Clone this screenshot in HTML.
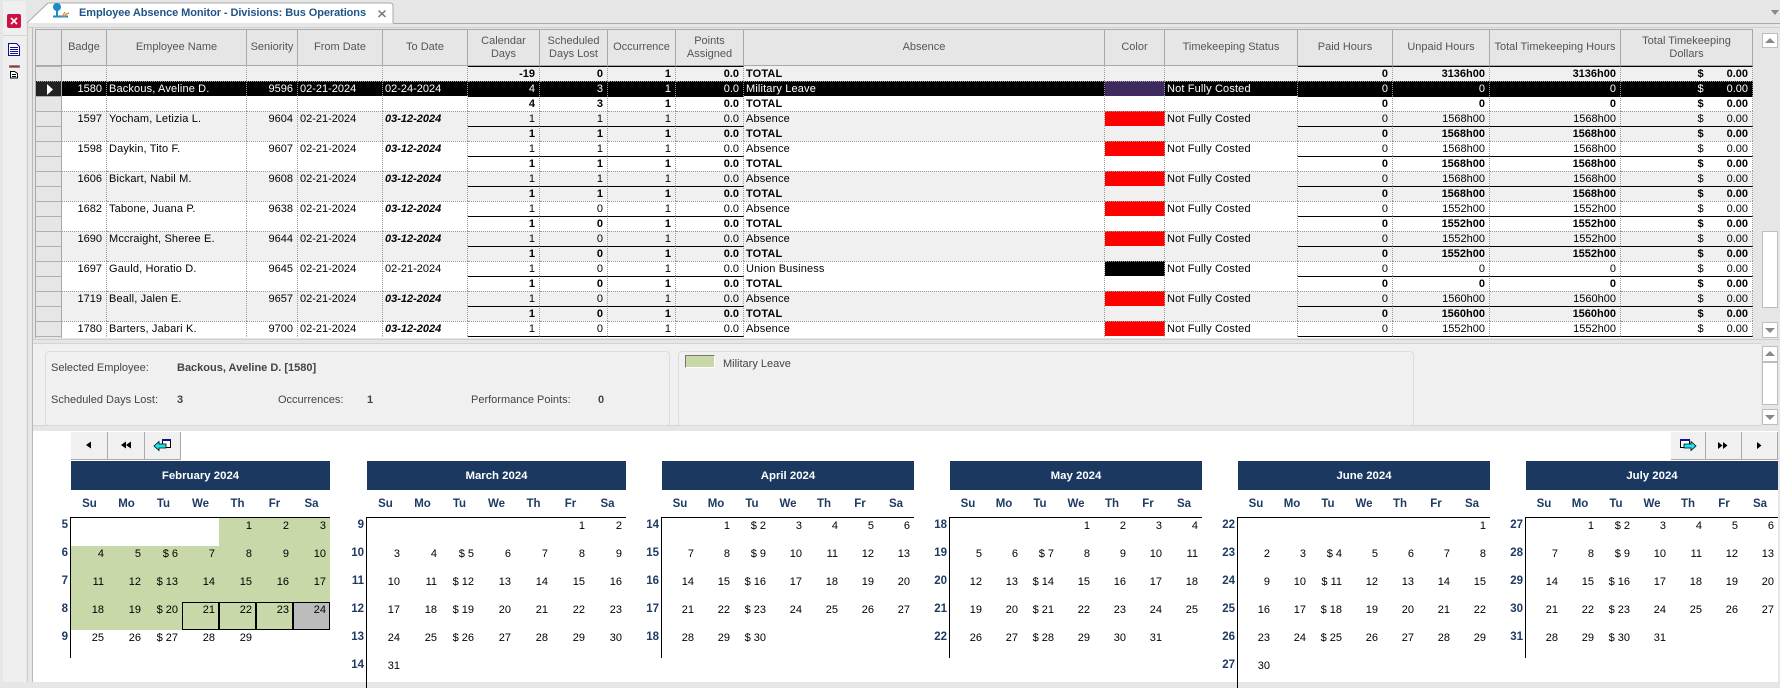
<!DOCTYPE html>
<html><head><meta charset="utf-8"><style>
html,body{margin:0;padding:0}
body{width:1780px;height:682px;overflow:hidden;position:relative;background:#e6e6e6;font:11px "Liberation Sans",sans-serif;color:#000}
.a{position:absolute}
#gw{position:absolute;left:35px;top:29px;width:1718px;height:309px;overflow:hidden;background:#f0f0f0}
#g{border-collapse:separate;border-spacing:0;table-layout:fixed;width:1718px}
#g th{height:35px;padding:0;font-weight:normal;color:#555;background:#e6e6e6;border-top:1px solid #a8a8a8;border-right:1px solid #a8a8a8;border-bottom:1px solid #a8a8a8;line-height:13px;text-align:center}
#g th:first-child{border-left:1px solid #a8a8a8}
#g td{height:13px;padding:1px 4px 0 2px;line-height:13px;vertical-align:top;white-space:nowrap;overflow:hidden;border-top:1px solid transparent;border-right:1px dotted #999}
#g td:nth-child(1){background:#e6e6e6;border-right:1px solid #a8a8a8;border-left:1px solid #a8a8a8;border-top:1px solid #b0b0b0}
#g td:nth-child(2),#g td:nth-child(4),#g td:nth-child(n+7):nth-child(-n+10),#g td:nth-child(n+14){text-align:right}
#g td:nth-child(3),#g td:nth-child(11),#g td:nth-child(13){letter-spacing:.15px}
#g tr.g td{background:#f0f0f0}
#g tr.w td{background:#fff}
#g tr.m td{border-top:1px dotted #999}
#g tr.t td{font-weight:bold}
#g tr.g td:first-child,#g tr.w td:first-child{background:#e6e6e6;border-top:1px solid #b0b0b0}
#g tr.t td:nth-child(n+7):nth-child(-n+10),#g tr.t td:nth-child(n+14){border-top:1px solid #000}
#g tr.s td{background:#000;color:#fff;border-top:1px dotted #999}
#g tr.s td:first-child{background:#222;position:relative}
#g tr.s td.c{background:#3e2a5f}
#g tr td.r{background:#f00}
#g tr td.k{background:#000}
#g td:nth-child(6) b{font-style:italic}
i{font-style:normal;margin-right:23px}
.sb{position:absolute;left:1762px;width:14px;background:#fff;border:1px solid #bdbdbd}
.det{color:#444}
.gb{position:absolute;border:1px solid #dcdcdc;border-radius:4px;box-sizing:border-box}
.btn{position:absolute;top:432px;height:28px;background:#f0f0f0;border-right:1px solid #aaa;border-bottom:1px solid #aaa;box-sizing:border-box}
.mo{position:absolute;top:461px}
.mh{height:29px;background:#1a3860;color:#fff;font-weight:bold;font-size:11.4px;line-height:30px;text-align:center}
.dw{display:flex;height:27px;font-weight:bold;font-size:11.5px;color:#1f3b63;line-height:28px;text-align:center}
.dw span{flex:1}
.gr{border-top:1px solid #000;border-left:1px solid #000;margin-left:-1px;position:relative}
.gr table{border-collapse:collapse;table-layout:fixed;width:100%;position:relative}
.gr td{height:28px;padding:1px 4px 0 0;text-align:right;vertical-align:top;line-height:14px;font-size:11px;box-sizing:border-box}
.gr td.x{background:#c8d8a8;box-shadow:inset 0 0 0 1px #000}
.gr td.y{background:#bcbcbc;box-shadow:inset 0 0 0 1px #000}
.gn{position:absolute;background:#c8d8a8}
.wk{position:absolute;left:-39px;width:36px;top:0;text-align:right;font-weight:bold;font-size:11.5px;color:#1f3b63;line-height:28px}
.wk div{height:28px;line-height:14px}
</style></head><body>

<div class="a" style="left:3px;top:1px;width:23px;height:681px;background:#efefef"></div>
<div class="a" style="left:3px;top:35px;width:23px;height:1px;background:#d4d4d4"></div>
<svg class="a" style="left:0;top:0" width="30" height="90">
<rect x="7" y="14" width="14" height="14" rx="2" fill="#cf1142"/>
<path d="M11 18l6 6M17 18l-6 6" stroke="#fff" stroke-width="1.6"/>
<path d="M8.500 43.500h8l3 3v9h-11z" fill="#fff" stroke="#10108c"/>
<path d="M10 47.500h8M10 49.500h8M10 51.500h8M10 53.500h8" stroke="#10108c"/>
<path d="M9.500 65.500h10v2h-10z" fill="#fff" stroke="#888"/><path d="M10 66.500h9" stroke="#c81e1e"/>
<path d="M10.500 71.500h4l3 2v4.500h-7z" fill="#fff" stroke="#000"/><path d="M12 74.500h4M12 76.500h4" stroke="#000"/>
</svg>

<svg class="a" style="left:26px;top:0" width="380" height="30">
<path d="M1 23 L22 3 H364 Q367 3 367 6 V23" fill="#fff" stroke="#aaa"/>
<circle cx="31" cy="7" r="4" fill="#1a8cc8"/>
<path d="M31 10V17M27 16.500H42" stroke="#1a8cc8" stroke-width="2" fill="none"/>
<path d="M36 17l3-5M38 17l2-3 3-1" stroke="#d98a2c" stroke-width="1.200" fill="none"/>
<path d="M352.500 10.500l7 6.500M359.500 10.500l-7 6.500" stroke="#777" stroke-width="1.500"/>
</svg>
<div class="a" style="left:79px;top:6px;font-weight:bold;color:#1f5488;font-size:11px;line-height:14px;white-space:nowrap;letter-spacing:-.08px">Employee Absence Monitor - Divisions: Bus Operations</div>
<div class="a" style="left:393px;top:23px;width:1387px;height:1px;background:#aaa"></div>
<div class="a" style="left:27px;top:27px;width:1753px;height:1px;background:#cfcfcf"></div>
<div class="a" style="left:27px;top:23px;width:1px;height:659px;background:#cfcfcf"></div>
<div class="a" style="left:32px;top:28px;width:1px;height:654px;background:#b8b8b8"></div>
<svg class="a" style="left:1770px;top:9px" width="10" height="7"><path d="M1 1h8l-4 5z" fill="#888"/></svg>

<div id="gw"><table id="g">
<colgroup><col style="width:27px"><col style="width:45px"><col style="width:140px"><col style="width:51px"><col style="width:85px"><col style="width:85px"><col style="width:72px"><col style="width:68px"><col style="width:68px"><col style="width:68px"><col style="width:361px"><col style="width:60px"><col style="width:133px"><col style="width:95px"><col style="width:97px"><col style="width:131px"><col style="width:132px"></colgroup>
<tr><th></th><th>Badge</th><th>Employee Name</th><th>Seniority</th><th>From Date</th><th>To Date</th><th>Calendar<br>Days</th><th>Scheduled<br>Days Lost</th><th>Occurrence</th><th>Points<br>Assigned</th><th>Absence</th><th>Color</th><th>Timekeeping Status</th><th>Paid Hours</th><th>Unpaid Hours</th><th>Total Timekeeping Hours</th><th>Total Timekeeping<br>Dollars</th></tr>
<tr class="t g"><td></td><td></td><td></td><td></td><td></td><td></td><td>-19</td><td>0</td><td>1</td><td>0.0</td><td>TOTAL</td><td></td><td></td><td>0</td><td>3136h00</td><td>3136h00</td><td><i>$</i>0.00</td></tr>
<tr class="s"><td><svg width="24" height="13" style="display:block"><path d="M9 1l6 5.500-6 5.500z" fill="#fff"/></svg></td><td>1580</td><td>Backous, Aveline D.</td><td>9596</td><td>02-21-2024</td><td>02-24-2024</td><td>4</td><td>3</td><td>1</td><td>0.0</td><td>Military Leave</td><td class="c"></td><td>Not Fully Costed</td><td>0</td><td>0</td><td>0</td><td><i>$</i>0.00</td></tr>
<tr class="t w"><td></td><td></td><td></td><td></td><td></td><td></td><td>4</td><td>3</td><td>1</td><td>0.0</td><td>TOTAL</td><td></td><td></td><td>0</td><td>0</td><td>0</td><td><i>$</i>0.00</td></tr>
<tr class="m g"><td></td><td>1597</td><td>Yocham, Letizia L.</td><td>9604</td><td>02-21-2024</td><td><b>03-12-2024</b></td><td>1</td><td>1</td><td>1</td><td>0.0</td><td>Absence</td><td class="r"></td><td>Not Fully Costed</td><td>0</td><td>1568h00</td><td>1568h00</td><td><i>$</i>0.00</td></tr>
<tr class="t g"><td></td><td></td><td></td><td></td><td></td><td></td><td>1</td><td>1</td><td>1</td><td>0.0</td><td>TOTAL</td><td></td><td></td><td>0</td><td>1568h00</td><td>1568h00</td><td><i>$</i>0.00</td></tr>
<tr class="m w"><td></td><td>1598</td><td>Daykin, Tito F.</td><td>9607</td><td>02-21-2024</td><td><b>03-12-2024</b></td><td>1</td><td>1</td><td>1</td><td>0.0</td><td>Absence</td><td class="r"></td><td>Not Fully Costed</td><td>0</td><td>1568h00</td><td>1568h00</td><td><i>$</i>0.00</td></tr>
<tr class="t w"><td></td><td></td><td></td><td></td><td></td><td></td><td>1</td><td>1</td><td>1</td><td>0.0</td><td>TOTAL</td><td></td><td></td><td>0</td><td>1568h00</td><td>1568h00</td><td><i>$</i>0.00</td></tr>
<tr class="m g"><td></td><td>1606</td><td>Bickart, Nabil M.</td><td>9608</td><td>02-21-2024</td><td><b>03-12-2024</b></td><td>1</td><td>1</td><td>1</td><td>0.0</td><td>Absence</td><td class="r"></td><td>Not Fully Costed</td><td>0</td><td>1568h00</td><td>1568h00</td><td><i>$</i>0.00</td></tr>
<tr class="t g"><td></td><td></td><td></td><td></td><td></td><td></td><td>1</td><td>1</td><td>1</td><td>0.0</td><td>TOTAL</td><td></td><td></td><td>0</td><td>1568h00</td><td>1568h00</td><td><i>$</i>0.00</td></tr>
<tr class="m w"><td></td><td>1682</td><td>Tabone, Juana P.</td><td>9638</td><td>02-21-2024</td><td><b>03-12-2024</b></td><td>1</td><td>0</td><td>1</td><td>0.0</td><td>Absence</td><td class="r"></td><td>Not Fully Costed</td><td>0</td><td>1552h00</td><td>1552h00</td><td><i>$</i>0.00</td></tr>
<tr class="t w"><td></td><td></td><td></td><td></td><td></td><td></td><td>1</td><td>0</td><td>1</td><td>0.0</td><td>TOTAL</td><td></td><td></td><td>0</td><td>1552h00</td><td>1552h00</td><td><i>$</i>0.00</td></tr>
<tr class="m g"><td></td><td>1690</td><td>Mccraight, Sheree E.</td><td>9644</td><td>02-21-2024</td><td><b>03-12-2024</b></td><td>1</td><td>0</td><td>1</td><td>0.0</td><td>Absence</td><td class="r"></td><td>Not Fully Costed</td><td>0</td><td>1552h00</td><td>1552h00</td><td><i>$</i>0.00</td></tr>
<tr class="t g"><td></td><td></td><td></td><td></td><td></td><td></td><td>1</td><td>0</td><td>1</td><td>0.0</td><td>TOTAL</td><td></td><td></td><td>0</td><td>1552h00</td><td>1552h00</td><td><i>$</i>0.00</td></tr>
<tr class="m w"><td></td><td>1697</td><td>Gauld, Horatio D.</td><td>9645</td><td>02-21-2024</td><td>02-21-2024</td><td>1</td><td>0</td><td>1</td><td>0.0</td><td>Union Business</td><td class="k"></td><td>Not Fully Costed</td><td>0</td><td>0</td><td>0</td><td><i>$</i>0.00</td></tr>
<tr class="t w"><td></td><td></td><td></td><td></td><td></td><td></td><td>1</td><td>0</td><td>1</td><td>0.0</td><td>TOTAL</td><td></td><td></td><td>0</td><td>0</td><td>0</td><td><i>$</i>0.00</td></tr>
<tr class="m g"><td></td><td>1719</td><td>Beall, Jalen E.</td><td>9657</td><td>02-21-2024</td><td><b>03-12-2024</b></td><td>1</td><td>0</td><td>1</td><td>0.0</td><td>Absence</td><td class="r"></td><td>Not Fully Costed</td><td>0</td><td>1560h00</td><td>1560h00</td><td><i>$</i>0.00</td></tr>
<tr class="t g"><td></td><td></td><td></td><td></td><td></td><td></td><td>1</td><td>0</td><td>1</td><td>0.0</td><td>TOTAL</td><td></td><td></td><td>0</td><td>1560h00</td><td>1560h00</td><td><i>$</i>0.00</td></tr>
<tr class="m w"><td></td><td>1780</td><td>Barters, Jabari K.</td><td>9700</td><td>02-21-2024</td><td><b>03-12-2024</b></td><td>1</td><td>0</td><td>1</td><td>0.0</td><td>Absence</td><td class="r"></td><td>Not Fully Costed</td><td>0</td><td>1552h00</td><td>1552h00</td><td><i>$</i>0.00</td></tr>
<tr class="t w"><td></td><td></td><td></td><td></td><td></td><td></td><td></td><td></td><td></td><td></td><td></td><td></td><td></td><td></td><td></td><td></td><td></td></tr>
</table></div>

<div class="sb" style="top:33px;height:13px"></div>
<div class="sb" style="top:231px;height:75px"></div>
<div class="sb" style="top:322px;height:14px"></div>
<svg class="a" style="left:1762px;top:33px" width="16" height="15"><path d="M3 10l5-5 5 5z" fill="#888"/></svg>
<svg class="a" style="left:1762px;top:322px" width="16" height="15"><path d="M3 6h10l-5 5z" fill="#888"/></svg>

<div class="a" style="left:33px;top:339px;width:1747px;height:1px;background:#cfcfcf"></div>
<div class="a" style="left:33px;top:343px;width:1728px;height:83px;background:#f0f0f0;border-top:1px solid #d4d4d4;border-bottom:1px solid #d4d4d4;box-sizing:border-box"></div>
<div class="gb" style="left:45px;top:351px;width:625px;height:75px"></div>
<div class="gb" style="left:678px;top:351px;width:736px;height:75px"></div>
<div class="a det" style="left:51px;top:361px;line-height:14px">Selected Employee:</div>
<div class="a det" style="left:177px;top:361px;line-height:14px;font-weight:bold">Backous, Aveline D. [1580]</div>
<div class="a det" style="left:51px;top:393px;line-height:14px">Scheduled Days Lost:</div>
<div class="a det" style="left:177px;top:393px;line-height:14px;font-weight:bold">3</div>
<div class="a det" style="left:278px;top:393px;line-height:14px">Occurrences:</div>
<div class="a det" style="left:367px;top:393px;line-height:14px;font-weight:bold">1</div>
<div class="a det" style="left:471px;top:393px;line-height:14px">Performance Points:</div>
<div class="a det" style="left:598px;top:393px;line-height:14px;font-weight:bold">0</div>
<div class="a" style="left:685px;top:355px;width:28px;height:11px;background:#c8d8a8;border:1px solid;border-color:#777 #fff #fff #777"></div>
<div class="a det" style="left:723px;top:357px;line-height:14px">Military Leave</div>

<div class="sb" style="top:346px;height:14px"></div>
<div class="sb" style="top:362px;height:41px"></div>
<div class="sb" style="top:409px;height:14px"></div>
<svg class="a" style="left:1762px;top:346px" width="16" height="16"><path d="M3 10l5-5 5 5z" fill="#888"/></svg>
<svg class="a" style="left:1762px;top:409px" width="16" height="16"><path d="M3 6h10l-5 5z" fill="#888"/></svg>

<div class="a" style="left:33px;top:431px;width:1745px;height:251px;background:#fff"></div>
<div class="btn" style="left:71px;width:37px"></div>
<div class="btn" style="left:108px;width:37px"></div>
<div class="btn" style="left:145px;width:36px"></div>
<div class="btn" style="left:1671px;width:35px"></div>
<div class="btn" style="left:1706px;width:36px"></div>
<div class="btn" style="left:1742px;width:36px"></div>
<svg class="a" style="left:71px;top:432px" width="115" height="28">
<path d="M20 9.500v7l-5-3.500zM55 9.500v7l-5-3.500zM60 9.500v7l-5-3.500z" fill="#000"/>
<rect x="91.500" y="7.500" width="8" height="8" fill="#fff" stroke="#000"/><rect x="91" y="7" width="9" height="2" fill="#10108c"/>
<path d="M83 14l5-4.500v2.500h7v4h-7v2.500z" fill="#19e6f0" stroke="#000" stroke-width=".8"/>
</svg>
<svg class="a" style="left:1676px;top:432px" width="95" height="28">
<rect x="4.500" y="7.500" width="9" height="8" fill="#fff" stroke="#000"/><rect x="4" y="7" width="10" height="2" fill="#10108c"/>
<path d="M20 14l-5-4.500v2.500h-7v4h7v2.500z" fill="#19e6f0" stroke="#000" stroke-width=".8"/>
<path d="M42 10v7l4.500-3.500zM47 10v7l4.500-3.500zM81 10v7l4.500-3.500z" fill="#000"/>
</svg>

<div class="mo" style="left:71px;width:259px"><div class="mh">February 2024</div>
<div class="dw"><span>Su</span><span>Mo</span><span>Tu</span><span>We</span><span>Th</span><span>Fr</span><span>Sa</span></div>
<div class="gr" style="height:140px;width:259px"><div class="wk"><div>5</div><div>6</div><div>7</div><div>8</div><div>9</div></div>
<div class="gn" style="left:148px;top:0;width:111px;height:28px"></div>
<div class="gn" style="left:0;top:28px;width:259px;height:56px"></div>
<div class="gn" style="left:0;top:84px;width:111px;height:28px"></div>
<table><tr><td></td><td></td><td></td><td></td><td>1</td><td>2</td><td>3</td></tr>
<tr><td>4</td><td>5</td><td>$ 6</td><td>7</td><td>8</td><td>9</td><td>10</td></tr>
<tr><td>11</td><td>12</td><td>$ 13</td><td>14</td><td>15</td><td>16</td><td>17</td></tr>
<tr><td>18</td><td>19</td><td>$ 20</td><td class="x">21</td><td class="x">22</td><td class="x">23</td><td class="y">24</td></tr>
<tr><td>25</td><td>26</td><td>$ 27</td><td>28</td><td>29</td><td></td><td></td></tr></table></div></div>

<div class="mo" style="left:367px;width:259px"><div class="mh">March 2024</div>
<div class="dw"><span>Su</span><span>Mo</span><span>Tu</span><span>We</span><span>Th</span><span>Fr</span><span>Sa</span></div>
<div class="gr" style="height:170px;width:259px"><div class="wk"><div>9</div><div>10</div><div>11</div><div>12</div><div>13</div><div>14</div></div>
<table><tr><td></td><td></td><td></td><td></td><td></td><td>1</td><td>2</td></tr>
<tr><td>3</td><td>4</td><td>$ 5</td><td>6</td><td>7</td><td>8</td><td>9</td></tr>
<tr><td>10</td><td>11</td><td>$ 12</td><td>13</td><td>14</td><td>15</td><td>16</td></tr>
<tr><td>17</td><td>18</td><td>$ 19</td><td>20</td><td>21</td><td>22</td><td>23</td></tr>
<tr><td>24</td><td>25</td><td>$ 26</td><td>27</td><td>28</td><td>29</td><td>30</td></tr>
<tr><td>31</td><td></td><td></td><td></td><td></td><td></td><td></td></tr></table></div></div>

<div class="mo" style="left:662px;width:252px"><div class="mh">April 2024</div>
<div class="dw"><span>Su</span><span>Mo</span><span>Tu</span><span>We</span><span>Th</span><span>Fr</span><span>Sa</span></div>
<div class="gr" style="height:140px;width:252px"><div class="wk"><div>14</div><div>15</div><div>16</div><div>17</div><div>18</div></div>
<table><tr><td></td><td>1</td><td>$ 2</td><td>3</td><td>4</td><td>5</td><td>6</td></tr>
<tr><td>7</td><td>8</td><td>$ 9</td><td>10</td><td>11</td><td>12</td><td>13</td></tr>
<tr><td>14</td><td>15</td><td>$ 16</td><td>17</td><td>18</td><td>19</td><td>20</td></tr>
<tr><td>21</td><td>22</td><td>$ 23</td><td>24</td><td>25</td><td>26</td><td>27</td></tr>
<tr><td>28</td><td>29</td><td>$ 30</td><td></td><td></td><td></td><td></td></tr></table></div></div>

<div class="mo" style="left:950px;width:252px"><div class="mh">May 2024</div>
<div class="dw"><span>Su</span><span>Mo</span><span>Tu</span><span>We</span><span>Th</span><span>Fr</span><span>Sa</span></div>
<div class="gr" style="height:140px;width:252px"><div class="wk"><div>18</div><div>19</div><div>20</div><div>21</div><div>22</div></div>
<table><tr><td></td><td></td><td></td><td>1</td><td>2</td><td>3</td><td>4</td></tr>
<tr><td>5</td><td>6</td><td>$ 7</td><td>8</td><td>9</td><td>10</td><td>11</td></tr>
<tr><td>12</td><td>13</td><td>$ 14</td><td>15</td><td>16</td><td>17</td><td>18</td></tr>
<tr><td>19</td><td>20</td><td>$ 21</td><td>22</td><td>23</td><td>24</td><td>25</td></tr>
<tr><td>26</td><td>27</td><td>$ 28</td><td>29</td><td>30</td><td>31</td><td></td></tr></table></div></div>

<div class="mo" style="left:1238px;width:252px"><div class="mh">June 2024</div>
<div class="dw"><span>Su</span><span>Mo</span><span>Tu</span><span>We</span><span>Th</span><span>Fr</span><span>Sa</span></div>
<div class="gr" style="height:170px;width:252px"><div class="wk"><div>22</div><div>23</div><div>24</div><div>25</div><div>26</div><div>27</div></div>
<table><tr><td></td><td></td><td></td><td></td><td></td><td></td><td>1</td></tr>
<tr><td>2</td><td>3</td><td>$ 4</td><td>5</td><td>6</td><td>7</td><td>8</td></tr>
<tr><td>9</td><td>10</td><td>$ 11</td><td>12</td><td>13</td><td>14</td><td>15</td></tr>
<tr><td>16</td><td>17</td><td>$ 18</td><td>19</td><td>20</td><td>21</td><td>22</td></tr>
<tr><td>23</td><td>24</td><td>$ 25</td><td>26</td><td>27</td><td>28</td><td>29</td></tr>
<tr><td>30</td><td></td><td></td><td></td><td></td><td></td><td></td></tr></table></div></div>

<div class="mo" style="left:1526px;width:252px"><div class="mh">July 2024</div>
<div class="dw"><span>Su</span><span>Mo</span><span>Tu</span><span>We</span><span>Th</span><span>Fr</span><span>Sa</span></div>
<div class="gr" style="height:140px;width:252px"><div class="wk"><div>27</div><div>28</div><div>29</div><div>30</div><div>31</div></div>
<table><tr><td></td><td>1</td><td>$ 2</td><td>3</td><td>4</td><td>5</td><td>6</td></tr>
<tr><td>7</td><td>8</td><td>$ 9</td><td>10</td><td>11</td><td>12</td><td>13</td></tr>
<tr><td>14</td><td>15</td><td>$ 16</td><td>17</td><td>18</td><td>19</td><td>20</td></tr>
<tr><td>21</td><td>22</td><td>$ 23</td><td>24</td><td>25</td><td>26</td><td>27</td></tr>
<tr><td>28</td><td>29</td><td>$ 30</td><td>31</td><td></td><td></td><td></td></tr></table></div></div>

</body></html>
